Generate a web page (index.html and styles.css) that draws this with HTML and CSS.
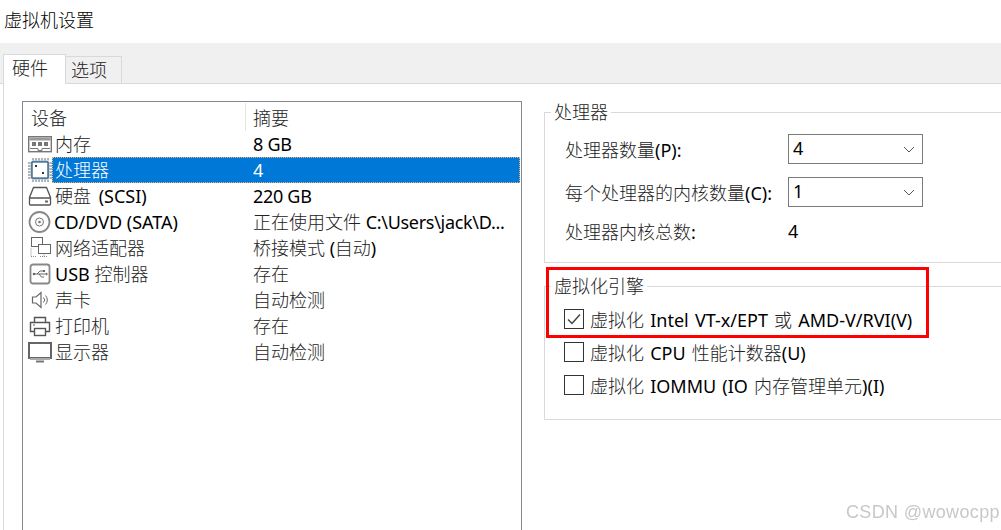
FILE: index.html
```html
<!DOCTYPE html>
<html lang="zh">
<head>
<meta charset="utf-8">
<title>虚拟机设置</title>
<link rel="stylesheet" href="styles.css">
</head>
<body>
<div class="window">
  <div class="title">虚拟机设置</div>
  <div class="tabbar">
    <div class="tab active">硬件</div>
    <div class="tab">选项</div>
  </div>
  <div class="content">
    <div class="list">
      <div class="list-head">
        <div class="col-a">设备</div>
        <div class="col-b">摘要</div>
      </div>
      <div class="row">
        <svg class="ico" viewBox="0 0 24 24"><rect x="0.7" y="4.700" width="22.600" height="15" fill="none" stroke="#777" stroke-width="1.400"/><rect x="1.500" y="5.500" width="21" height="3" fill="#999"/><rect x="4" y="10" width="4" height="4" fill="#777"/><rect x="10" y="10" width="4" height="4" fill="#777"/><rect x="16" y="10" width="4" height="4" fill="#777"/><path d="M2 16.500h8v2h4v-2h8" fill="none" stroke="#777"/></svg>
        <div class="cells"><div class="dev">内存</div><div class="sum lat">8 GB</div></div>
      </div>
      <div class="row selected">
        <svg class="ico" viewBox="0 0 24 24"><rect x="3.800" y="3.800" width="16.400" height="16.400" rx="1.500" fill="none" stroke="#4f7da3" stroke-width="2"/><path d="M5 0v2.500M8 0v2.500M11 0v2.500M14 0v2.500M17 0v2.500M20 0v2.500M5 21.500v2.500M8 21.500v2.500M11 21.500v2.500M14 21.500v2.500M17 21.500v2.500M20 21.500v2.500M0 5h2.500M0 8h2.500M0 11h2.500M0 14h2.500M0 17h2.500M0 20h2.500M21.500 5h2.500M21.500 8h2.500M21.500 11h2.500M21.500 14h2.500M21.500 17h2.500M21.500 20h2.500" stroke="#666" fill="none"/><rect x="7" y="7" width="2" height="2" fill="#333"/><rect x="14" y="14" width="2" height="2" fill="#333"/></svg>
        <div class="cells"><div class="dev">处理器</div><div class="sum lat">4</div></div>
      </div>
      <div class="row">
        <svg class="ico" viewBox="0 0 24 24"><path d="M5.500 3.500h13l4 10v6.500a1 1 0 0 1-1 1h-19a1 1 0 0 1-1-1v-6.500zM1.500 14h21" fill="none" stroke="#555" stroke-width="1.300"/><rect x="17" y="16.500" width="3" height="2" fill="#666"/></svg>
        <div class="cells"><div class="dev wide">硬盘 <span class="lat">(SCSI)</span></div><div class="sum lat">220 GB</div></div>
      </div>
      <div class="row">
        <svg class="ico" viewBox="0 0 24 24"><circle cx="11.500" cy="12" r="10" fill="none" stroke="#888" stroke-width="1.800"/><circle cx="11.500" cy="12" r="4" fill="none" stroke="#777"/><circle cx="11.500" cy="12" r="1.300" fill="#777"/></svg>
        <div class="cells"><div class="dev lat">CD/DVD (SATA)</div><div class="sum">正在使用文件 <span class="lat">C:\Users\jack\D...</span></div></div>
      </div>
      <div class="row">
        <svg class="ico" viewBox="0 0 24 24"><rect x="3.500" y="1.500" width="11" height="9" fill="#fff" stroke="#666"/><rect x="10.500" y="8.500" width="12" height="9" fill="#fff" stroke="#666"/><path d="M16 17.500v3M12 20.500h8M3 12.500v8h6" fill="none" stroke="#888" stroke-dasharray="1 1"/></svg>
        <div class="cells"><div class="dev">网络适配器</div><div class="sum">桥接模式 <span class="lat">(</span>自动<span class="lat">)</span></div></div>
      </div>
      <div class="row">
        <svg class="ico" viewBox="0 0 24 24"><rect x="2.500" y="2.500" width="19" height="19" rx="2.500" fill="none" stroke="#888" stroke-width="1.800"/><path d="M6 12h12M9 12l3-3h3M11 12l2.500 3H16" fill="none" stroke="#666"/><path d="M18 10.500l2 1.500-2 1.500z" fill="#666"/><rect x="15" y="8" width="2" height="2" fill="#666"/><circle cx="6" cy="12" r="1.300" fill="#666"/></svg>
        <div class="cells"><div class="dev"><span class="lat">USB</span> 控制器</div><div class="sum">存在</div></div>
      </div>
      <div class="row">
        <svg class="ico" viewBox="0 0 24 24"><path d="M4.500 9h3.500l5-4.500v15L8 15H4.500z" fill="none" stroke="#666" stroke-width="1.200"/><path d="M15.500 9.500a3.500 3.500 0 0 1 0 5M17.500 7.500a6.500 6.500 0 0 1 0 9" fill="none" stroke="#666"/></svg>
        <div class="cells"><div class="dev">声卡</div><div class="sum">自动检测</div></div>
      </div>
      <div class="row">
        <svg class="ico" viewBox="0 0 24 24"><path d="M6.500 8.500v-5h11v5M6.500 17.500h-4v-9h19v9h-4" fill="none" stroke="#555" stroke-width="1.400"/><rect x="6.500" y="14.500" width="11" height="7" fill="none" stroke="#555" stroke-width="1.400"/><path d="M5 11h2" stroke="#555"/></svg>
        <div class="cells"><div class="dev">打印机</div><div class="sum">存在</div></div>
      </div>
      <div class="row">
        <svg class="ico" viewBox="0 0 24 24"><rect x="1" y="3" width="22" height="15" fill="none" stroke="#666" stroke-width="2"/><rect x="2" y="18" width="20" height="2" fill="#aaa"/><path d="M8 21.500h8" stroke="#777" stroke-width="2"/></svg>
        <div class="cells"><div class="dev">显示器</div><div class="sum">自动检测</div></div>
      </div>
    </div>
    <div class="side">
      <fieldset class="group group-cpu">
        <legend>处理器</legend>
        <div class="field">
          <label class="field-label">处理器数量<span class="lat">(P):</span></label>
          <div class="combo"><span>4</span><svg class="chev" viewBox="0 0 12 7"><path d="M1 1l5 5 5-5" fill="none" stroke="#555"/></svg></div>
        </div>
        <div class="field">
          <label class="field-label">每个处理器的内核数量<span class="lat">(C):</span></label>
          <div class="combo"><span>1</span><svg class="chev" viewBox="0 0 12 7"><path d="M1 1l5 5 5-5" fill="none" stroke="#555"/></svg></div>
        </div>
        <div class="field static">
          <label class="field-label">处理器内核总数<span class="lat">:</span></label>
          <div class="value">4</div>
        </div>
      </fieldset>
      <fieldset class="group group-virt">
        <legend>虚拟化引擎</legend>
        <div class="check"><span class="box"><svg viewBox="0 0 18 18"><path d="M3 9.500l4 4 8-9" fill="none" stroke="#444" stroke-width="1.500"/></svg></span><span>虚拟化 <span class="lat">Intel VT-x/EPT</span> 或 <span class="lat">AMD-V/RVI(V)</span></span></div>
        <div class="check"><span class="box"></span><span>虚拟化 <span class="lat">CPU</span> 性能计数器<span class="lat">(U)</span></span></div>
        <div class="check"><span class="box"></span><span>虚拟化 <span class="lat">IOMMU (IO</span> 内存管理单元<span class="lat">)(I)</span></span></div>
      </fieldset>
    </div>
  </div>
  <div class="highlight"></div>
  <div class="mark">CSDN @wowocpp</div>
</div>
</body>
</html>
```
FILE: styles.css
```css
* { box-sizing: border-box; }
html, body { margin: 0; padding: 0; background: #fff; }
body {
  font-family: "Noto Sans", "Noto Sans CJK SC", sans-serif;
  font-size: 18px;
  font-weight: 300;
  color: #222;
}
.lat { font-weight: 400; color: #000; }
.window { position: relative; width: 1001px; height: 530px; overflow: hidden; background: #fff; }
.title { height: 43px; padding: 7px 0 0 4px; line-height: 26px; color: #000; }
.tabbar {
  height: 41px;
  background: #f0f0f0;
  border-bottom: 1px solid #d9d9d9;
  padding: 11px 0 0 3px;
  display: flex;
  align-items: flex-end;
}
.tab {
  width: 56px;
  height: 27px;
  border: 1px solid #d9d9d9;
  border-bottom: 0;
  border-left: 0;
  padding-left: 5px;
  line-height: 27px;
}
.tab.active {
  width: 63px;
  height: 30px;
  margin-bottom: -1px;
  background: #fff;
  border-left: 1px solid #d9d9d9;
  padding-left: 8px;
  line-height: 27px;
}
.content {
  display: flex;
  height: 446px;
  margin-left: 3px;
  border-left: 1px solid #d9d9d9;
  padding: 17px 0 0 18px;
}
.list {
  width: 500px;
  height: 460px;
  flex: none;
  border: 1px solid #828790;
}
.list-head { display: flex; height: 29px; line-height: 30px; padding-top: 1px; }
.col-a { width: 223px; padding-left: 8px; border-right: 1px solid #e4e4e4; height: 28px; }
.col-b { padding-left: 7px; }
.row { display: flex; align-items: center; height: 26px; padding-left: 5px; }
.ico { width: 24px; height: 24px; flex: none; }
.cells { display: flex; flex: 1; height: 26px; margin-right: 1px; line-height: 26px; white-space: nowrap; }
.dev { width: 201px; flex: none; padding-left: 3px; }
.dev.lat { padding-left: 2px; }
.dev.wide { word-spacing: 3px; }
.sum.lat, .sum .lat { letter-spacing: -0.3px; }
.selected .cells { background: #0078d7; color: #fff; outline: 1px dotted #f0b070; outline-offset: -1px; }
.selected .lat { color: #fff; }
.side { width: 457px; margin-left: 22px; flex: none; }
.group {
  margin: 0;
  padding: 0 0 0 6px;
  border: 1px solid #d9d9d9;
  border-right: 0;
  min-width: 0;
}
.group legend { padding: 0 3px; line-height: 22px; }
.group-cpu { height: 162px; padding-top: 11px; }
.group-virt { height: 145px; margin-top: 12px; padding-top: 12px; }
.field { display: flex; align-items: center; height: 30px; margin: 0 0 13px 14px; }
.field.static { margin-top: -1px; height: 24px; }
.field-label { width: 223px; flex: none; white-space: nowrap; }
.combo {
  width: 135px;
  height: 30px;
  border: 1px solid #7a7a7a;
  display: flex;
  align-items: center;
  justify-content: space-between;
  padding: 0 7px 2px 4px;
  font-weight: 400;
  color: #000;
}
.chev { width: 12px; height: 7px; margin-top: 2px; }
.value { font-weight: 400; color: #000; }
.check { display: flex; align-items: center; height: 20px; margin: 0 0 13px 13px; white-space: nowrap; word-spacing: 1.500px; }
.box { width: 20px; height: 20px; border: 1px solid #333; background: #fff; margin-right: 6px; flex: none; display: block; }
.box svg { display: block; width: 18px; height: 18px; }
.highlight { position: absolute; left: 546px; top: 267px; width: 383px; height: 71px; border: 3px solid #f00; }
.mark { position: absolute; left: 846px; top: 500px; font-family: "Liberation Sans", sans-serif; font-size: 18px; letter-spacing: 0.35px; line-height: 24px; color: #c8c8c8; white-space: nowrap; filter: blur(0.4px); }
```
